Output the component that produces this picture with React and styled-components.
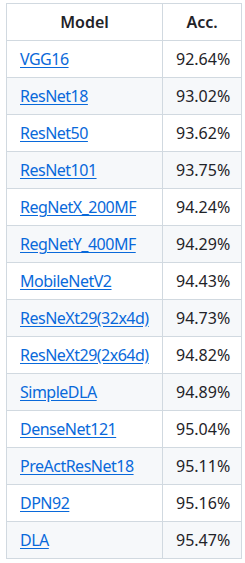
import React from "react";
import styled, { createGlobalStyle } from "styled-components";

const rows = [
  ["VGG16", "92.64%"],
  ["ResNet18", "93.02%"],
  ["ResNet50", "93.62%"],
  ["ResNet101", "93.75%"],
  ["RegNetX_200MF", "94.24%"],
  ["RegNetY_400MF", "94.29%"],
  ["MobileNetV2", "94.43%"],
  ["ResNeXt29(32x4d)", "94.73%"],
  ["ResNeXt29(2x64d)", "94.82%"],
  ["SimpleDLA", "94.89%"],
  ["DenseNet121", "95.04%"],
  ["PreActResNet18", "95.11%"],
  ["DPN92", "95.16%"],
  ["DLA", "95.47%"],
];

const Global = createGlobalStyle`
  body {
    margin: 0;
    background: #ffffff;
    font-family: "Noto Sans", "Liberation Sans", sans-serif;
    color: #1f2328;
  }
`;

const Wrap = styled.div`
  padding: 3px 0 0 6px;
`;

const Table = styled.table`
  border-collapse: collapse;
  border-spacing: 0;
  table-layout: fixed;
  width: 235px;
  font-size: 16px;
  line-height: 24px;
`;

const Row = styled.tr`
  background: ${(p) => (p.$striped ? "#f6f8fa" : "#ffffff")};
  border-top: 1px solid #d1d9e0;
`;

const Head = styled.th`
  padding: 6px 13px;
  border: 1px solid #d1d9e0;
  font-weight: 600;
  text-align: center;
`;

const Cell = styled.td`
  padding: 6px 13px;
  border: 1px solid #d1d9e0;
  text-align: ${(p) => (p.$right ? "right" : "left")};
  white-space: nowrap;
`;

const Link = styled.a`
  color: #0969da;
  text-decoration: underline;
  text-underline-offset: 2px;
  letter-spacing: -0.5px;
`;

export default function App() {
  return (
    <Wrap>
      <Global />
      <Table>
        <colgroup>
          <col style={{ width: 156 }} />
          <col style={{ width: 79 }} />
        </colgroup>
        <thead>
          <Row>
            <Head>Model</Head>
            <Head>Acc.</Head>
          </Row>
        </thead>
        <tbody>
          {rows.map(([name, acc], i) => (
            <Row key={name} $striped={i % 2 === 1}>
              <Cell>
                <Link href="#">{name}</Link>
              </Cell>
              <Cell $right>{acc}</Cell>
            </Row>
          ))}
        </tbody>
      </Table>
    </Wrap>
  );
}
